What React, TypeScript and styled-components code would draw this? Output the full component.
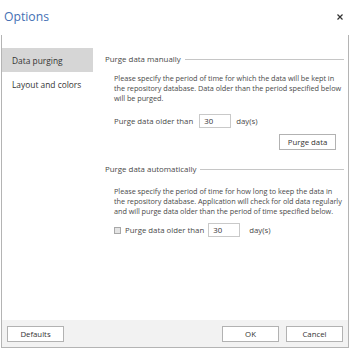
import React, { FC } from 'react';
import styled, { createGlobalStyle } from 'styled-components';

const GlobalStyle = createGlobalStyle`
    html, body {
        margin: 0;
        padding: 0;
        background: #ffffff;
    }
    body {
        font-family: 'Open Sans', 'Noto Sans', sans-serif;
        color: #444444;
    }
`;

const Window = styled.div`
    width: 350px;
    height: 349px;
    box-sizing: border-box;
    padding: 0 1px 1px 1px;
    display: flex;
    flex-direction: column;
    background: #ffffff;
`;

const TitleBar = styled.div`
    height: 35px;
    flex: none;
    display: flex;
    align-items: center;
    justify-content: space-between;
    padding: 0 5px 2px 3px;
    box-sizing: border-box;
`;

const Title = styled.span`
    font-size: 12.2px;
    color: #4470b4;
`;

const CloseButton = styled.button`
    border: none;
    background: none;
    padding: 0;
    width: 8px;
    height: 8px;
    display: flex;
    align-items: center;
    justify-content: center;
    cursor: pointer;
`;

const Frame = styled.div`
    flex: 1;
    display: flex;
    flex-direction: column;
    border: 1px solid #b4b4b4;
    border-top: none;
    min-height: 0;
`;

const Main = styled.div`
    flex: 1;
    display: flex;
    padding-top: 13px;
`;

const Nav = styled.div`
    width: 91px;
    flex: none;
    display: flex;
    flex-direction: column;
`;

const NavItem = styled.div<{ $active?: boolean }>`
    height: 24px;
    display: flex;
    align-items: center;
    padding-left: 10px;
    font-size: 8.4px;
    color: #333333;
    background: ${(p) => (p.$active ? '#d6d6d6' : 'transparent')};
    white-space: nowrap;
`;

const Content = styled.div`
    flex: 1;
    min-width: 0;
    padding: 3px 4px 0 12px;
    display: flex;
    flex-direction: column;
`;

const Section = styled.div<{ $gap?: number }>`
    margin-top: ${(p) => p.$gap ?? 0}px;
    display: flex;
    flex-direction: column;
`;

const Heading = styled.div`
    display: flex;
    align-items: center;
    gap: 4px;
    height: 16px;
    font-size: 7.9px;
    color: #4a4a4a;
    white-space: nowrap;

    &::after {
        content: '';
        flex: 1;
        height: 1px;
        background: #c6c6c6;
    }
`;

const Body = styled.div`
    padding-left: 9px;
`;

const Paragraph = styled.p<{ $top: number }>`
    margin: ${(p) => p.$top}px 0 0 0;
    font-size: 7.3px;
    line-height: 10px;
    letter-spacing: -0.04px;
    color: #4a4a4a;
    white-space: nowrap;
`;

const Row = styled.div<{ $top: number }>`
    margin-top: ${(p) => p.$top}px;
    height: 14px;
    display: flex;
    align-items: center;
    font-size: 7.8px;
    color: #4a4a4a;
    white-space: nowrap;
`;

const NumberBox = styled.div<{ $left: number; $right: number }>`
    width: 32px;
    height: 14px;
    box-sizing: border-box;
    border: 1px solid #c9c9c9;
    margin: 0 ${(p) => p.$right}px 0 ${(p) => p.$left}px;
    padding-left: 4px;
    display: flex;
    align-items: center;
    font-size: 7.8px;
    color: #333333;
`;

const Check = styled.span`
    width: 7px;
    height: 7px;
    box-sizing: border-box;
    border: 1px solid #a8a8a8;
    background: #e4e4e4;
    margin-right: 4px;
`;

const ButtonRow = styled.div`
    display: flex;
    justify-content: flex-end;
    margin-top: 6px;
    padding-right: 8px;
`;

const Button = styled.button`
    width: 57px;
    height: 16px;
    box-sizing: border-box;
    border: 1px solid #b2b2b2;
    background: #ffffff;
    font-family: inherit;
    font-size: 7.8px;
    color: #333333;
    padding: 0;
    cursor: pointer;
`;

const Footer = styled.div`
    height: 27px;
    flex: none;
    background: #f2f2f2;
    display: flex;
    align-items: center;
    padding: 0 5px;
    gap: 7px;
`;

const Spacer = styled.div`
    flex: 1;
`;

const App: FC = () => {
    return (
        <>
            <GlobalStyle />
            <Window>
                <TitleBar>
                    <Title>Options</Title>
                    <CloseButton aria-label="Close">
                        <svg width="6" height="6" viewBox="0 0 6 6">
                            <path d="M0.5 0.5 L5.5 5.5 M5.5 0.5 L0.5 5.5" stroke="#333" strokeWidth="1.2" />
                        </svg>
                    </CloseButton>
                </TitleBar>
                <Frame>
                    <Main>
                        <Nav>
                            <NavItem $active>Data purging</NavItem>
                            <NavItem>Layout and colors</NavItem>
                        </Nav>
                        <Content>
                            <Section>
                                <Heading>Purge data manually</Heading>
                                <Body>
                                    <Paragraph $top={6}>
                                        Please specify the period of time for which the data will be kept in
                                        <br />
                                        the repository database. Data older than the period specified below
                                        <br />
                                        will be purged.
                                    </Paragraph>
                                    <Row $top={11}>
                                        Purge data older than
                                        <NumberBox $left={6} $right={5}>30</NumberBox>
                                        day(s)
                                    </Row>
                                </Body>
                                <ButtonRow>
                                    <Button>Purge data</Button>
                                </ButtonRow>
                            </Section>
                            <Section $gap={11}>
                                <Heading>Purge data automatically</Heading>
                                <Body>
                                    <Paragraph $top={9}>
                                        Please specify the period of time for how long to keep the data in
                                        <br />
                                        the repository database. Application will check for old data regularly
                                        <br />
                                        and will purge data older than the period of time specified below.
                                    </Paragraph>
                                    <Row $top={7}>
                                        <Check />
                                        Purge data older than
                                        <NumberBox $left={4} $right={9}>30</NumberBox>
                                        day(s)
                                    </Row>
                                </Body>
                            </Section>
                        </Content>
                    </Main>
                    <Footer>
                        <Button>Defaults</Button>
                        <Spacer />
                        <Button>OK</Button>
                        <Button>Cancel</Button>
                    </Footer>
                </Frame>
            </Window>
        </>
    );
};

export default App;
